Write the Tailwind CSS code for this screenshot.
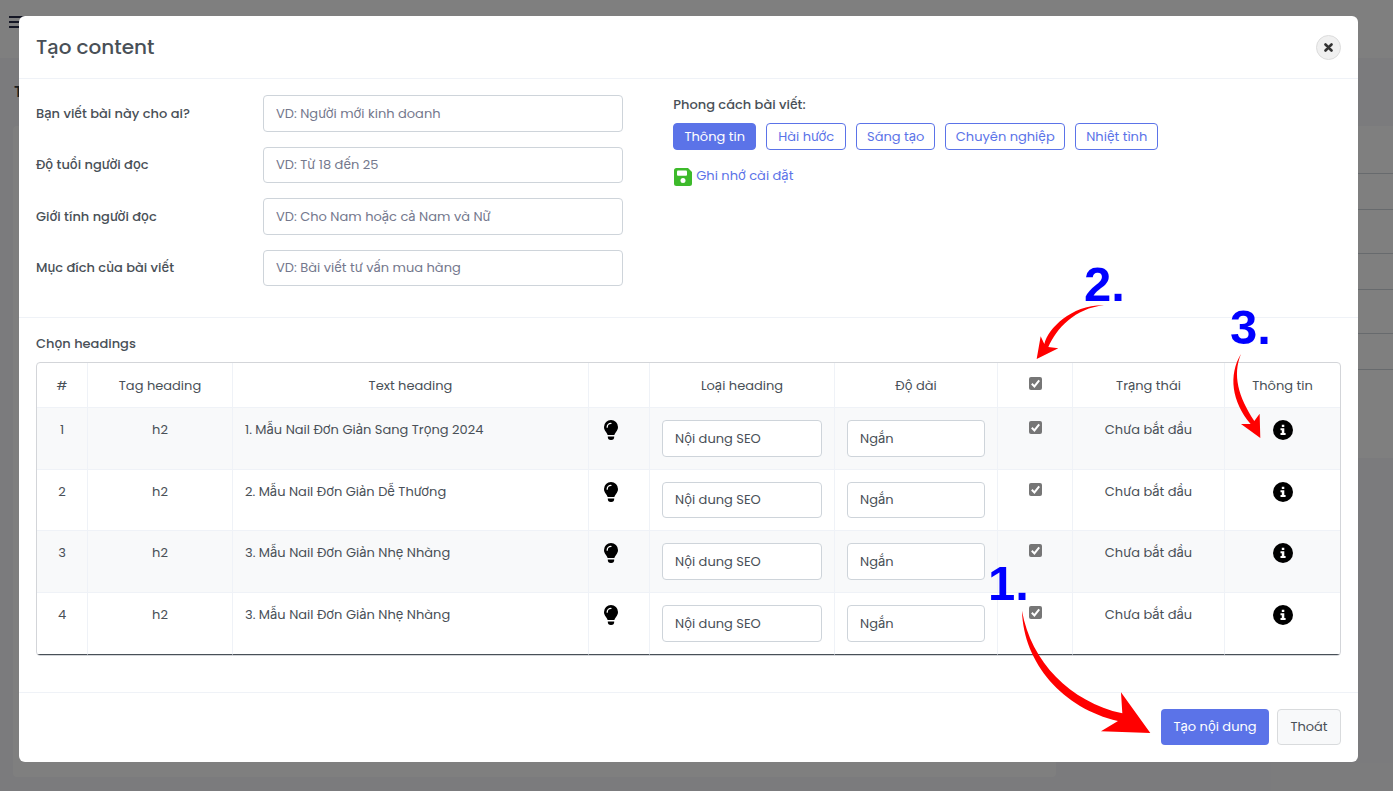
<!DOCTYPE html>
<html lang="vi">
<head>
<meta charset="utf-8">
<meta name="viewport" content="width=device-width, initial-scale=1">
<title>Tạo content</title>
<script src="https://cdn.jsdelivr.net/npm/@tailwindcss/browser@4"></script>
</head>
<body class="font-[Poppins,Inter,sans-serif] text-[13px] leading-5 text-[#495057]">
<div class="relative min-h-screen overflow-hidden bg-[#f7f7fa]">

  <!-- Page behind the dialog -->
  <div class="absolute inset-0 flex flex-col" aria-hidden="true">
    <div class="h-[58px] bg-white pl-[9px] pt-4">
      <div class="flex w-4 flex-col gap-[3px]">
        <span class="h-0.5 bg-[#2a2f4a]"></span><span class="h-0.5 bg-[#2a2f4a]"></span><span class="h-0.5 bg-[#2a2f4a]"></span>
      </div>
    </div>
    <div class="flex h-[68px] items-center pl-3.5 text-base font-semibold text-[#343a40]">T</div>
    <div class="flex items-start gap-6 pl-[13px]">
      <div class="h-[651px] w-[1043px] shrink-0 rounded bg-white"></div>
      <div class="flex h-[332px] flex-1 flex-col gap-[43px] rounded-l bg-white pt-[47px]">
        <div class="h-[37px] border-y border-[#ced4da]"></div>
        <div class="h-[37px] border-y border-[#ced4da]"></div>
        <div class="h-[37px] border-y border-[#ced4da]"></div>
      </div>
    </div>
  </div>
  <div class="absolute inset-0 bg-black/50"></div>

  <div class="relative pb-[29px] pl-[19px] pr-[35px] pt-4">
    <div role="dialog" aria-labelledby="title" class="rounded-md bg-white">
      <header class="flex h-[63px] items-center justify-between border-b border-[#eff2f7] px-[17px]">
        <h1 id="title" class="text-xl font-medium">Tạo content</h1>
        <button type="button" aria-label="Đóng" class="flex size-[25px] items-center justify-center rounded-full border border-[#dcdcdc] bg-[#f0f0f0]">
          <svg class="size-[9px]" viewBox="0 0 9 9" fill="none" stroke="#333" stroke-width="2.6" stroke-linecap="round"><path d="M1.5 1.5l6 6M7.5 1.5l-6 6"/></svg>
        </button>
      </header>

      <form id="content-form" class="px-[17px]">
        <section class="flex gap-[50px] pb-[31px] pt-4">
          <div class="flex w-[45%] flex-col gap-[15px]">
            <div class="flex items-center"><label for="f1" class="w-[227px] font-medium">Bạn viết bài này cho ai?</label><input id="f1" type="text" placeholder="VD: Người mới kinh doanh" class="h-[37px] min-w-0 flex-1 rounded border border-[#ced4da] px-3 placeholder:text-[#74788d]"></div>
            <div class="flex items-center"><label for="f2" class="w-[227px] font-medium">Độ tuổi người đọc</label><input id="f2" type="text" placeholder="VD: Từ 18 đến 25" class="h-9 min-w-0 flex-1 rounded border border-[#ced4da] px-3 placeholder:text-[#74788d]"></div>
            <div class="flex items-center"><label for="f3" class="w-[227px] font-medium">Giới tính người đọc</label><input id="f3" type="text" placeholder="VD: Cho Nam hoặc cả Nam và Nữ" class="h-[37px] min-w-0 flex-1 rounded border border-[#ced4da] px-3 placeholder:text-[#74788d]"></div>
            <div class="flex items-center"><label for="f4" class="w-[227px] font-medium">Mục đích của bài viết</label><input id="f4" type="text" placeholder="VD: Bài viết tư vấn mua hàng" class="h-9 min-w-0 flex-1 rounded border border-[#ced4da] px-3 placeholder:text-[#74788d]"></div>
          </div>
          <div class="min-w-0 flex-1">
            <p class="font-medium">Phong cách bài viết:</p>
            <div class="mt-2 flex flex-wrap gap-2.5 text-[#5b73e8]">
              <button type="button" class="h-[27px] w-[83px] rounded border border-[#5b73e8] bg-[#5b73e8] text-white">Thông tin</button>
              <button type="button" class="h-[27px] w-20 rounded border border-[#5b73e8]">Hài hước</button>
              <button type="button" class="h-[27px] w-[79px] rounded border border-[#5b73e8]">Sáng tạo</button>
              <button type="button" class="h-[27px] w-[120px] rounded border border-[#5b73e8]">Chuyên nghiệp</button>
              <button type="button" class="h-[27px] w-[83px] rounded border border-[#5b73e8]">Nhiệt tình</button>
            </div>
            <a href="#" class="mt-4 flex gap-1 pl-px text-[#5b73e8]">
              <svg class="mt-0.5 size-[18px]" viewBox="0 0 18 18"><path fill="#3dba2b" d="M2.5 0H14l4 4v11.500a2.500 2.500 0 0 1-2.500 2.500h-13A2.500 2.500 0 0 1 0 15.500v-13A2.500 2.500 0 0 1 2.500 0z"/><rect x="3" y="2.500" width="10" height="5.200" rx="1" fill="#fff"/><circle cx="9" cy="12.500" r="2.500" fill="#fff"/></svg>
              <span>Ghi nhớ cài đặt</span>
            </a>
          </div>
        </section>

        <section class="-mx-[17px] border-t border-[#eff2f7] px-[17px] pb-9 pt-4">
          <h2 class="font-medium">Chọn headings</h2>
          <div class="mt-2 overflow-hidden rounded border border-[#d3d5d9]">
            <table class="w-full table-fixed border-separate border-spacing-0 text-center">
              <colgroup>
                <col class="w-[51px]"><col class="w-[145px]"><col><col class="w-[61px]"><col class="w-[185px]"><col class="w-[163px]"><col class="w-[75px]"><col class="w-[152px]"><col class="w-[115px]">
              </colgroup>
              <thead>
                <tr class="h-[45px] *:border-b *:border-r *:border-[#eff2f7] *:pt-0.5 *:font-normal *:last:border-r-0">
                  <th>#</th><th>Tag heading</th><th>Text heading</th><th></th><th>Loại heading</th><th>Độ dài</th>
                  <th><input type="checkbox" checked aria-label="Chọn tất cả" class="js-check"></th>
                  <th>Trạng thái</th><th>Thông tin</th>
                </tr>
              </thead>
              <tbody id="rows"></tbody>
            </table>
          </div>
        </section>
      </form>

      <footer class="flex justify-end gap-2 border-t border-[#eff2f7] px-[17px] pb-[17px] pt-4">
        <button type="submit" form="content-form" class="h-9 w-[108px] rounded bg-[#5b73e8] text-white">Tạo nội dung</button>
        <button type="button" class="h-9 w-16 rounded border border-[#d9dbdd] bg-[#f8f9fa]">Thoát</button>
      </footer>
    </div>
  </div>

  <!-- Step markers over the dialog -->
  <svg class="pointer-events-none absolute left-0 top-0 h-[791px] w-[1393px]" viewBox="0 0 1393 791">
    <g fill="#f00">
      <path transform="translate(960 540) scale(.3333)" d="M186 212C213 365 330 485 487 520L483 457L571 579L423 574L474 543C310 505 190 370 186 212Z"/>
      <path transform="translate(980 250) scale(.3333)" d="M372 166C275 164 205 235 193 282L182 259L170 327L235 295L205 291C230 235 285 175 372 166Z"/>
      <path transform="translate(980 250) scale(.3333)" d="M783 312C745 375 755 455 812 522L783 522L841 564L839 491L823 513C775 440 757 375 783 312Z"/>
    </g>
    <g fill="#00f" font-family="Liberation Sans, Arial, sans-serif" font-size="49" font-weight="700">
      <text x="988" y="600">1.</text>
      <text x="1084" y="301">2.</text>
      <text x="1230" y="344">3.</text>
    </g>
  </svg>
</div>

<script>
  const headings = [
    { text: '1. Mẫu Nail Đơn Giản Sang Trọng 2024', field: 'h-[37px]' },
    { text: '2. Mẫu Nail Đơn Giản Dễ Thương', field: 'h-9' },
    { text: '3. Mẫu Nail Đơn Giản Nhẹ Nhàng', field: 'h-[37px]' },
    { text: '3. Mẫu Nail Đơn Giản Nhẹ Nhàng', field: 'h-[37px]' }
  ];
  document.getElementById('rows').innerHTML = headings.map(({ text, field }, i) => `
    <tr class="align-top odd:bg-[#f8f9fa] *:border-b *:border-r *:border-[#eff2f7] *:px-3 *:py-3 *:last:border-r-0 last:*:border-b-[#495057]">
      <td>${i + 1}</td>
      <td>h2</td>
      <td class="text-left">${text}</td>
      <td><button type="button" aria-label="Gợi ý" class="-mt-0.5 -ml-0.5 block size-6">
        <svg class="mx-auto size-5" viewBox="0 0 20 20"><path d="M10 0a7 7 0 0 1 7 7c0 2-.8 3.400-1.800 4.700C14.200 13 13.700 14 13.400 15H6.600C6.300 14 5.800 13 4.800 11.700 3.800 10.400 3 9 3 7a7 7 0 0 1 7-7zM6.800 16.500h6.400v.5a3 3 0 0 1-3 3h-.4a3 3 0 0 1-3-3z"/><path d="M6.200 7.200A3.900 3.900 0 0 1 10 3.300" fill="none" stroke="#fff" stroke-width="1.300" stroke-linecap="round"/></svg>
      </button></td>
      <td><select aria-label="Loại heading" class="${field} block w-full appearance-none rounded border border-[#ced4da] bg-white px-3"><option>Nội dung SEO</option></select></td>
      <td><select aria-label="Độ dài" class="${field} block w-full appearance-none rounded border border-[#ced4da] bg-white px-3"><option>Ngắn</option></select></td>
      <td><input type="checkbox" checked aria-label="Chọn heading ${i + 1}" class="js-check"></td>
      <td>Chưa bắt đầu</td>
      <td><button type="button" aria-label="Thông tin" class="mx-auto -mt-0.5 block size-6">
        <svg class="mx-auto size-5" viewBox="0 0 20 20"><circle cx="10" cy="10" r="10"/><path fill="#fff" d="M8.800 4.700h2.500v2.400H8.800zM7.500 8.300h3.800v4.700h1.300v1.900H7.500V13h1.300v-2.800H7.500z"/></svg>
      </button></td>
    </tr>`).join('');

  // Grey rounded tick boxes
  const tick = '<svg class="pointer-events-none absolute inset-0 size-[13px]" viewBox="0 0 13 13" fill="none" stroke="#fff" stroke-width="2"><path d="M2.800 6.800l2.600 2.600 4.800-6"/></svg>';
  document.querySelectorAll('.js-check').forEach(box => {
    const wrap = document.createElement('span');
    wrap.className = box.parentElement.tagName === 'TH' ? 'relative mx-auto -mt-1.5 block size-[13px]' : 'relative mx-auto mt-px block size-[13px]';
    box.className = 'block size-[13px] appearance-none rounded-xs bg-[#767676]';
    box.replaceWith(wrap);
    wrap.append(box);
    wrap.insertAdjacentHTML('beforeend', tick);
  });
</script>
</body>
</html>
